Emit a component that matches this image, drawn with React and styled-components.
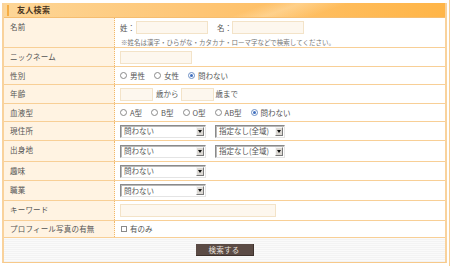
import React from "react";
import styled, { createGlobalStyle } from "styled-components";

const Global = createGlobalStyle`
  html, body { margin: 0; padding: 0; background: #fff; }
  body { font-family: "Noto Sans CJK JP", "Noto Sans", sans-serif; color: #555; }
  #root { height: 266px; }
`;

const Page = styled.div`
  display: flex;
  height: 266px;
  padding: 3px 0 0 2px;
  box-sizing: border-box;
  gap: 2px;
  overflow: hidden;
`;

const Box = styled.div`
  width: 445px;
  box-sizing: border-box;
  border-left: 2px solid #f9d29c;
  border-right: 2px solid #f9d29c;
  border-bottom: 1px solid #f7c98a;
  align-self: flex-start;
  font-size: 7.5px;
  line-height: 10px;
`;

const EdgeLine = styled.div`
  width: 1px;
  margin-top: -3px;
  background: #f8cf95;
`;

const Header = styled.div`
  height: 14px;
  border-bottom: 1px solid #f5bd70;
  display: flex;
  align-items: center;
  background:
    linear-gradient(160deg, rgba(255,255,255,0) 55%, rgba(255,240,210,0.35) 62%, rgba(255,255,255,0) 72%),
    linear-gradient(to right, #fdd697 0%, #fec574 45%, #ffb547 100%);
`;

const HeaderMark = styled.span`
  width: 2px;
  height: 11px;
  margin-left: 3px;
  background: #f6ad45;
`;

const HeaderTitle = styled.span`
  margin-left: 8px;
  font-weight: bold;
  font-size: 8px;
  letter-spacing: 0.3px;
  color: #4a3622;
`;

const Row = styled.div`
  display: grid;
  grid-template-columns: 111px 1fr;
  min-height: ${(p) => p.$h}px;
  border-bottom: 1px solid #f8cf96;
`;

const Label = styled.div`
  background: #fff3e2;
  border-right: 1px dotted #f2b868;
  padding: ${(p) => p.$top ?? 4}px 0 0 6px;
  color: #555;
  letter-spacing: 0.2px;
`;

const Value = styled.div`
  display: flex;
  flex-direction: ${(p) => (p.$column ? "column" : "row")};
  align-items: ${(p) => (p.$column ? "flex-start" : "center")};
  padding: ${(p) => (p.$column ? "3px 0 0 5px" : "0 0 0 5px")};
`;

const Line = styled.div`
  display: flex;
  align-items: center;
`;

const Note = styled.div`
  margin-top: 4px;
  font-size: 6.5px;
  line-height: 8px;
  color: #777;
  margin-left: 1px;
`;

const Text = styled.span`
  margin-left: ${(p) => p.$ml ?? 0}px;
  margin-right: ${(p) => p.$mr ?? 0}px;
  white-space: nowrap;
`;

const TextInput = styled.div`
  width: ${(p) => p.$w}px;
  height: 13px;
  box-sizing: border-box;
  border: 1px solid #f3e3c8;
  background: #fdf7ee;
  margin-left: ${(p) => p.$ml ?? 0}px;
`;

const RadioCircle = styled.span`
  width: 7px;
  height: 7px;
  box-sizing: border-box;
  border-radius: 50%;
  border: 1px solid ${(p) => (p.$on ? "#6d8fc4" : "#8a8a8a")};
  background: #fff;
  display: inline-flex;
  align-items: center;
  justify-content: center;
  margin-right: 3px;
  &::after {
    content: "";
    width: 3px;
    height: 3px;
    border-radius: 50%;
    background: ${(p) => (p.$on ? "#3f6fc0" : "transparent")};
  }
`;

const RadioItem = styled.span`
  display: inline-flex;
  align-items: center;
  margin-right: 9px;
  white-space: nowrap;
`;

const CheckSquare = styled.span`
  width: 6px;
  height: 6px;
  box-sizing: border-box;
  border: 1px solid #8a8a8a;
  background: #fff;
  margin: 0 3px 0 1px;
`;

const Select = styled.div`
  width: ${(p) => p.$w}px;
  height: 13px;
  box-sizing: border-box;
  border-top: 1px solid #8a8a8a;
  border-left: 1px solid #8a8a8a;
  border-right: 1px solid #e4e4e4;
  border-bottom: 1px solid #e4e4e4;
  box-shadow: inset 1px 1px 0 #b8b8b8;
  background: #fff;
  display: flex;
  align-items: center;
  justify-content: space-between;
  padding: 0 1px 0 3px;
  margin-right: 9px;
  color: #555;
`;

const SelectArrow = styled.span`
  width: 8px;
  height: 9px;
  box-sizing: border-box;
  background: #dcd9d4;
  border-top: 1px solid #f6f6f6;
  border-left: 1px solid #f6f6f6;
  border-right: 1px solid #7a7a7a;
  border-bottom: 1px solid #7a7a7a;
  display: flex;
  align-items: center;
  justify-content: center;
`;

const Footer = styled.div`
  height: 24px;
  display: flex;
  align-items: center;
  justify-content: center;
  background: repeating-linear-gradient(to bottom, #fafafa 0px, #fafafa 1px, #f3f3f3 1px, #f3f3f3 2px);
`;

const Button = styled.div`
  width: 58px;
  height: 12px;
  background: #5b4b45;
  color: #e9e2de;
  display: flex;
  align-items: center;
  justify-content: center;
  font-size: 7.5px;
  letter-spacing: 0.3px;
  border-right: 1px solid #3e322d;
  border-bottom: 1px solid #3e322d;
  box-sizing: border-box;
`;

const Arrow = () => (
  <svg width="4" height="3" viewBox="0 0 4 3">
    <path d="M0 0 H4 L2 3 Z" fill="#111" />
  </svg>
);

const Sel = ({ w, children }) => (
  <Select $w={w}>
    <span>{children}</span>
    <SelectArrow>
      <Arrow />
    </SelectArrow>
  </Select>
);

const Radio = ({ on, children }) => (
  <RadioItem>
    <RadioCircle $on={on} />
    {children}
  </RadioItem>
);

export default function App() {
  return (
    <>
      <Global />
      <Page>
        <Box>
          <Header>
            <HeaderMark />
            <HeaderTitle>友人検索</HeaderTitle>
          </Header>

          <Row $h={29}>
            <Label $top={4}>名前</Label>
            <Value $column>
              <Line>
                <Text>姓：</Text>
                <TextInput $w={72} $ml={1} />
                <Text $ml={9}>名：</Text>
                <TextInput $w={72} />
              </Line>
              <Note>※姓名は漢字・ひらがな・カタカナ・ローマ字などで検索してください。</Note>
            </Value>
          </Row>

          <Row $h={18}>
            <Label>ニックネーム</Label>
            <Value>
              <TextInput $w={72} />
            </Value>
          </Row>

          <Row $h={17}>
            <Label>性別</Label>
            <Value>
              <Radio>男性</Radio>
              <Radio>女性</Radio>
              <Radio on>問わない</Radio>
            </Value>
          </Row>

          <Row $h={18}>
            <Label>年齢</Label>
            <Value>
              <TextInput $w={33} />
              <Text $ml={3}>歳から</Text>
              <TextInput $w={33} $ml={2} />
              <Text $ml={2}>歳まで</Text>
            </Value>
          </Row>

          <Row $h={17}>
            <Label>血液型</Label>
            <Value>
              <Radio>A型</Radio>
              <Radio>B型</Radio>
              <Radio>O型</Radio>
              <Radio>AB型</Radio>
              <Radio on>問わない</Radio>
            </Value>
          </Row>

          <Row $h={18}>
            <Label>現住所</Label>
            <Value>
              <Sel w={86}>問わない</Sel>
              <Sel w={70}>指定なし(全域)</Sel>
            </Value>
          </Row>

          <Row $h={20}>
            <Label>出身地</Label>
            <Value>
              <Sel w={86}>問わない</Sel>
              <Sel w={70}>指定なし(全域)</Sel>
            </Value>
          </Row>

          <Row $h={18}>
            <Label>趣味</Label>
            <Value>
              <Sel w={86}>問わない</Sel>
            </Value>
          </Row>

          <Row $h={19}>
            <Label>職業</Label>
            <Value>
              <Sel w={86}>問わない</Sel>
            </Value>
          </Row>

          <Row $h={19}>
            <Label>キーワード</Label>
            <Value>
              <TextInput $w={156} />
            </Value>
          </Row>

          <Row $h={16}>
            <Label $top={3}>プロフィール写真の有無</Label>
            <Value>
              <CheckSquare />
              <Text>有のみ</Text>
            </Value>
          </Row>

          <Footer>
            <Button>検索する</Button>
          </Footer>
        </Box>
        <EdgeLine />
      </Page>
    </>
  );
}
